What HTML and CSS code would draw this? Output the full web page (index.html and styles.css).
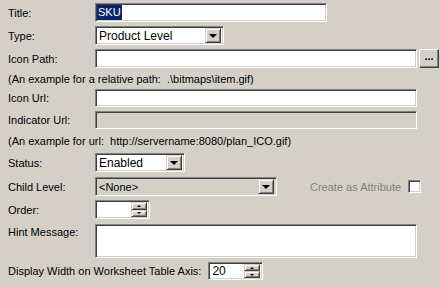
FILE: index.html
```html
<!DOCTYPE html>
<html lang="en">
<head>
    <meta charset="UTF-8">
    <title>Level Properties</title>
    <link rel="stylesheet" href="styles.css">
</head>
<body>

    <div class="form">
        <div class="row h19">
            <span class="label">Title:</span>
            <div class="field w-title"><span class="selected">SKU</span></div>
        </div>

        <div class="row h19">
            <span class="label">Type:</span>
            <div class="field combo w-type">
                <span class="value">Product Level</span>
                <span class="drop"><i class="arrow-down"></i></span>
            </div>
        </div>

        <div class="row h19">
            <span class="label">Icon Path:</span>
            <div class="field w-long"></div>
            <button class="browse">...</button>
        </div>

        <div class="note note-path">(An example for a relative path:&nbsp; .\bitmaps\item.gif)</div>

        <div class="row h18">
            <span class="label">Icon Url:</span>
            <div class="field w-long"></div>
        </div>

        <div class="row h18">
            <span class="label">Indicator Url:</span>
            <div class="field disabled w-long"></div>
        </div>

        <div class="note note-url">(An example for url:&nbsp; http://servername:8080/plan_ICO.gif)</div>

        <div class="row h19 gap-after">
            <span class="label">Status:</span>
            <div class="field combo w-status">
                <span class="value">Enabled</span>
                <span class="drop"><i class="arrow-down"></i></span>
            </div>
        </div>

        <div class="row h19">
            <span class="label">Child Level:</span>
            <div class="field combo disabled w-child">
                <span class="value">&lt;None&gt;</span>
                <span class="drop"><i class="arrow-down"></i></span>
            </div>
            <span class="attr-label">Create as Attribute</span>
            <span class="checkbox"></span>
        </div>

        <div class="row h19 gap-after">
            <span class="label">Order:</span>
            <div class="field spin w-spin">
                <span class="value"></span>
                <span class="spin-buttons">
                    <span class="spin-btn"><i class="arrow-up"></i></span>
                    <span class="spin-btn"><i class="arrow-small-down"></i></span>
                </span>
            </div>
        </div>

        <div class="row row-top h34">
            <span class="label label-top">Hint Message:</span>
            <div class="field area w-long"></div>
        </div>

        <div class="row h18">
            <span class="label label-wide">Display Width on Worksheet Table Axis:</span>
            <div class="field spin w-spin">
                <span class="value">20</span>
                <span class="spin-buttons">
                    <span class="spin-btn"><i class="arrow-up"></i></span>
                    <span class="spin-btn"><i class="arrow-small-down"></i></span>
                </span>
            </div>
        </div>
    </div>

</body>
</html>
```

FILE: styles.css
```css
body {
    margin: 0;
    padding: 3px 0 0 8px;
    width: 440px;
    height: 287px;
    box-sizing: border-box;
    overflow: hidden;
    background-color: #d4d0c8;
    font-family: "Liberation Sans", Arial, sans-serif;
    font-size: 11px;
    color: #000;
}

.form {
    display: flex;
    flex-direction: column;
    gap: 4px;
}

.row {
    display: flex;
    align-items: center;
}

.row-top {
    align-items: flex-start;
}

.h18 { height: 18px; }
.h19 { height: 19px; }
.h34 { height: 34px; }

.gap-after {
    margin-bottom: 1px;
}

.label {
    width: 87px;
    flex: none;
}

.label-top {
    padding-top: 2px;
}

.label-wide {
    width: auto;
    margin-right: 7px;
}

/* sunken 3D field, windows classic */
.field {
    box-sizing: border-box;
    height: 100%;
    background-color: #fff;
    border: 1px solid;
    border-color: #808080 #fff #fff #808080;
    box-shadow: inset 1px 1px #404040, inset -1px -1px #d4d0c8;
    display: flex;
    align-items: center;
    padding: 1px 2px 1px 1px;
    flex: none;
}

.field.disabled {
    background-color: #d4d0c8;
}

.w-title { width: 232px; }
.w-type { width: 129px; }
.w-long { width: 322px; }
.w-status { width: 90px; }
.w-child { width: 182px; }
.w-spin { width: 55px; }

.selected {
    background-color: #0a246a;
    color: #fff;
    padding: 1px 1px;
    line-height: 13px;
}

.value {
    flex: 1;
    padding-left: 2px;
    white-space: nowrap;
    overflow: hidden;
}

.combo .value {
    font-size: 12px;
}

.combo.disabled .value {
    font-size: 11px;
}

.drop {
    box-sizing: border-box;
    width: 16px;
    height: 100%;
    background-color: #d4d0c8;
    border: 1px solid;
    border-color: #d4d0c8 #404040 #404040 #d4d0c8;
    box-shadow: inset 1px 1px #fff, inset -1px -1px #808080;
    display: flex;
    align-items: center;
    justify-content: center;
}

.arrow-down {
    width: 0;
    height: 0;
    border-left: 4px solid transparent;
    border-right: 4px solid transparent;
    border-top: 4px solid #000;
    margin-top: 1px;
}

.browse {
    box-sizing: border-box;
    width: 20px;
    height: 19px;
    margin-left: 2px;
    padding: 0 0 4px;
    background-color: #d4d0c8;
    border: 1px solid;
    border-color: #fff #404040 #404040 #fff;
    box-shadow: inset -1px -1px #808080;
    font-family: "Liberation Sans", Arial, sans-serif;
    font-size: 11px;
    font-weight: bold;
    line-height: 11px;
    letter-spacing: 0;
}

.note {
    white-space: nowrap;
    display: flex;
    align-items: center;
}

.note-path { height: 13px; }
.note-url { height: 16px; }

.attr-label {
    color: #808080;
    margin-left: 33px;
    font-size: 11px;
}

.checkbox {
    box-sizing: border-box;
    width: 13px;
    height: 13px;
    margin-left: 7px;
    background-color: #fff;
    border: 1px solid;
    border-color: #808080 #fff #fff #808080;
    box-shadow: inset 1px 1px #404040, inset -1px -1px #d4d0c8;
}

.spin .value {
    font-size: 12px;
}

.spin-buttons {
    display: flex;
    flex-direction: column;
    width: 16px;
    height: 100%;
}

.spin-btn {
    box-sizing: border-box;
    flex: 1;
    background-color: #d4d0c8;
    border: 1px solid;
    border-color: #d4d0c8 #404040 #404040 #d4d0c8;
    box-shadow: inset 1px 1px #fff, inset -1px -1px #808080;
    display: flex;
    align-items: center;
    justify-content: center;
}

.arrow-up {
    width: 0;
    height: 0;
    border-left: 2px solid transparent;
    border-right: 2px solid transparent;
    border-bottom: 2px solid #000;
}

.arrow-small-down {
    width: 0;
    height: 0;
    border-left: 2px solid transparent;
    border-right: 2px solid transparent;
    border-top: 2px solid #000;
}

.area {
    align-items: flex-start;
}
```
